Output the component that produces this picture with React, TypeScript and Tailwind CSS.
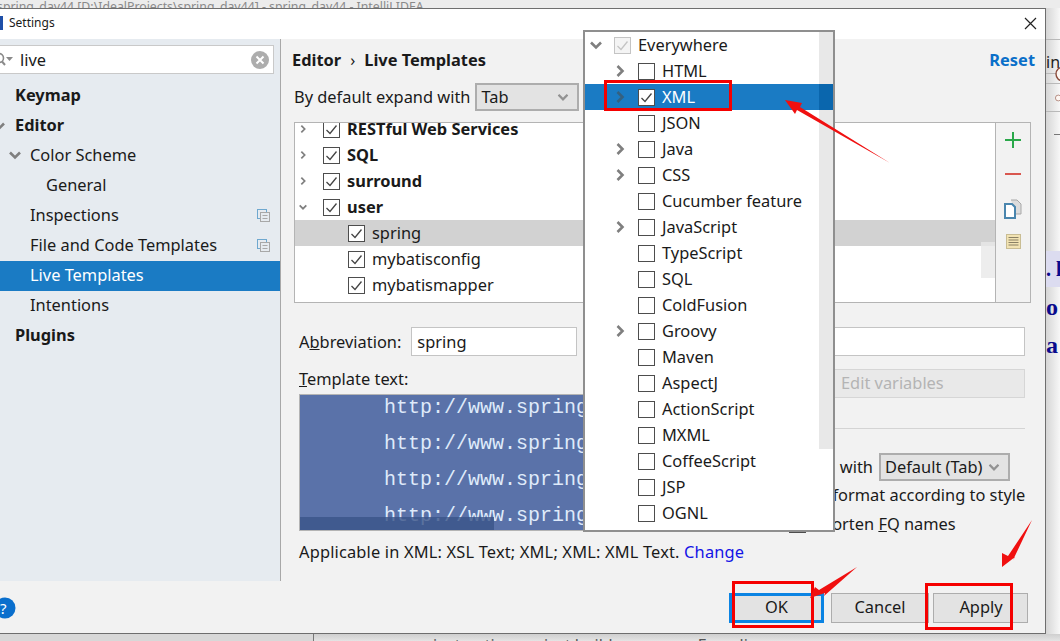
import * as React from "react";

const TREE = [
  { label: "RESTful Web Services", bold: true, chevron: "right", clipped: true },
  { label: "SQL", bold: true, chevron: "right" },
  { label: "surround", bold: true, chevron: "right" },
  { label: "user", bold: true, chevron: "down" },
  { label: "spring", child: true, active: true },
  { label: "mybatisconfig", child: true },
  { label: "mybatismapper", child: true },
];

const CONTEXTS = [
  { label: "HTML", chevron: true },
  { label: "XML", chevron: true, checked: true, selected: true },
  { label: "JSON" },
  { label: "Java", chevron: true },
  { label: "CSS", chevron: true },
  { label: "Cucumber feature" },
  { label: "JavaScript", chevron: true },
  { label: "TypeScript" },
  { label: "SQL" },
  { label: "ColdFusion" },
  { label: "Groovy", chevron: true },
  { label: "Maven" },
  { label: "AspectJ" },
  { label: "ActionScript" },
  { label: "MXML" },
  { label: "CoffeeScript" },
  { label: "JSP" },
  { label: "OGNL" },
];

function Chevron({ down, dark, className }: { down?: boolean; dark?: boolean; className?: string }) {
  return (
    <svg width="12" height="12" viewBox="0 0 12 12" className={className} aria-hidden>
      <path
        d={down ? "M1 3.5 L6 8.5 L11 3.5" : "M3.5 1 L8.5 6 L3.5 11"}
        fill="none"
        stroke={dark ? "#35607f" : "#7f7f7f"}
        strokeWidth="2.6"
      />
    </svg>
  );
}

function Check({ checked, muted }: { checked?: boolean; muted?: boolean }) {
  const line = muted ? "#c4c4c4" : "#4d4d4d";
  return (
    <svg width="17" height="17" viewBox="0 0 17 17" className="shrink-0" aria-hidden>
      <rect x="0.5" y="0.5" width="16" height="16" fill={muted ? "#f4f4f4" : "#ffffff"} stroke={line} />
      {checked && <path d="M3.5 9 L7 12.5 L13.5 4.5" fill="none" stroke={muted ? "#c4c4c4" : "#444444"} strokeWidth="1.3" />}
    </svg>
  );
}

function ScopeIcon() {
  return (
    <svg width="13" height="13" viewBox="0 0 13 13" aria-hidden>
      <rect x="0.5" y="0.5" width="9" height="9" fill="#e6ebf0" stroke="#6fa8cf" />
      <rect x="3.5" y="3.5" width="9" height="9" fill="#e6ebf0" stroke="#a8a8a8" />
      <path d="M5.5 6.5 H10.5 M5.5 9.5 H10.5" stroke="#a8a8a8" />
    </svg>
  );
}

function Combo({ label, className }: { label: string; className: string }) {
  return (
    <div className={`flex h-[28px] shrink-0 items-center justify-between border-2 border-[#adadad] bg-[#e3e3e3] pl-[4px] pr-[8px] ${className}`}>
      <span>{label}</span>
      <Chevron down className="scale-90 opacity-80" />
    </div>
  );
}

function Sidebar() {
  return (
    <aside className="flex w-[281px] shrink-0 flex-col border-r border-[#a8a8a8] bg-[#e6ebf0] pt-[6px]">
      <div className="-ml-[1px] mr-[6px] flex h-[29px] items-center border border-[#c9c9c9] bg-white pr-[4px]">
        <svg width="19" height="16" viewBox="0 0 19 16" className="-ml-[4px] shrink-0" aria-hidden>
          <circle cx="3" cy="6" r="4.5" fill="none" stroke="#8a8a8a" strokeWidth="1.6" />
          <path d="M6 9.5 L9 13" stroke="#8a8a8a" strokeWidth="2" />
          <path d="M10 5 H17 L13.5 9 Z" fill="#8a8a8a" />
        </svg>
        <span className="ml-[5px] flex-1 pt-[1px] text-[#1a1a1a]">live</span>
        <svg width="18" height="18" viewBox="0 0 18 18" aria-hidden>
          <circle cx="9" cy="9" r="9" fill="#adadad" />
          <path d="M5.5 5.5 L12.5 12.5 M12.5 5.5 L5.5 12.5" stroke="#ffffff" strokeWidth="2" />
        </svg>
      </div>
      <nav className="mt-[7px] flex flex-col">
        <div className="flex h-[30px] items-center pb-[2px] pl-[15px] font-bold">Keymap</div>
        <div className="relative flex h-[30px] items-center pb-[2px] pl-[15px] font-bold">
          <Chevron down className="absolute -left-[7px] top-[9px]" />
          Editor
        </div>
        <div className="flex h-[30px] items-center pb-[2px] pl-[9px]">
          <Chevron down />
          <span className="ml-[9px]">Color Scheme</span>
        </div>
        <div className="flex h-[30px] items-center pb-[2px] pl-[46px]">General</div>
        <div className="flex h-[30px] items-center justify-between pb-[2px] pl-[30px] pr-[10px]">
          Inspections
          <ScopeIcon />
        </div>
        <div className="flex h-[30px] items-center justify-between pb-[2px] pl-[30px] pr-[10px]">
          File and Code Templates
          <ScopeIcon />
        </div>
        <div className="flex h-[30px] items-center bg-[#1a7bc4] pb-[2px] pl-[30px] text-white">Live Templates</div>
        <div className="flex h-[30px] items-center pb-[2px] pl-[30px]">Intentions</div>
        <div className="flex h-[30px] items-center pb-[2px] pl-[15px] font-bold">Plugins</div>
      </nav>
    </aside>
  );
}

function TemplateTree() {
  return (
    <div className="flex h-[181px] border border-[#b4b4b4]">
      <div className="relative flex flex-1 flex-col overflow-hidden bg-white">
        {TREE.map((row) => (
          <div
            key={row.label}
            className={`flex h-[26px] shrink-0 items-center ${row.clipped ? "-mt-[7px]" : ""} ${row.active ? "bg-[#d2d2d2]" : ""} ${row.child ? "pl-[53px]" : "pl-[4px]"}`}
          >
            {!row.child && (
              <span className="mr-[16px] flex w-[8px] justify-center">
                <Chevron down={row.chevron === "down"} />
              </span>
            )}
            <Check checked />
            <span className={`ml-[7px] ${row.bold ? "font-bold" : ""}`}>{row.label}</span>
          </div>
        ))}
        <div className="absolute right-0 top-[119px] h-[36px] w-[14px] bg-[#e8e8e8]/80" />
      </div>
      <div className="flex w-[35px] flex-col items-center border-l border-[#b4b4b4] pt-[9px]">
        <svg width="16" height="16" viewBox="0 0 16 16" aria-hidden>
          <path d="M8 0 V16 M0 8 H16" stroke="#2aa84a" strokeWidth="2" />
        </svg>
        <svg width="16" height="16" viewBox="0 0 16 16" className="mt-[18px]" aria-hidden>
          <path d="M0 8 H16" stroke="#d9574f" strokeWidth="2" />
        </svg>
        <svg width="18" height="20" viewBox="0 0 18 20" className="mt-[17px]" aria-hidden>
          <path d="M7 1 H13 L17 5 V15 H12" fill="#dcdcdc" stroke="#a8a8a8" />
          <path d="M1 5 H8 L11 8 V19 H1 Z" fill="#ffffff" stroke="#4a86ae" strokeWidth="2" />
        </svg>
        <svg width="15" height="15" viewBox="0 0 15 15" className="mt-[15px]" aria-hidden>
          <rect x="0.5" y="0.5" width="14" height="14" fill="#f2e3b3" stroke="#c9bd94" />
          <path d="M2.5 3.5 H12.5 M2.5 6 H12.5 M2.5 8.5 H12.5 M2.5 11 H12.5" stroke="#8a8065" />
        </svg>
      </div>
    </div>
  );
}

function TemplateEditor() {
  return (
    <div className="relative h-[137px] overflow-hidden border border-[#b4b4b4] bg-[#5a72a9] pl-[84px] font-['Liberation_Mono',monospace] text-[20px] leading-[36px] text-[#dfeafa]">
      <div className="-mt-[5px] whitespace-nowrap">http://www.springframework.org</div>
      <div className="whitespace-nowrap">http://www.springframework.org</div>
      <div className="whitespace-nowrap">http://www.springframework.org</div>
      <div className="whitespace-nowrap">http://www.springframework.org</div>
      <div className="absolute bottom-0 left-0 h-[13px] w-[194px] bg-[#3a5488]/80" />
    </div>
  );
}

function MainPanel() {
  return (
    <section className="flex min-w-0 flex-1 flex-col pl-[13px] pr-[14px]">
      <div className="flex h-[42px] items-center justify-between font-bold">
        <div className="-ml-[2px] flex items-center">
          Editor
          <span className="mx-[9px] font-normal">›</span>
          Live Templates
        </div>
        <span className="-mr-[4px] text-[#0a6fc9]">Reset</span>
      </div>
      <div className="mt-[2px] flex h-[28px] items-center">
        <span className="mr-[5px]">By default expand with</span>
        <Combo label="Tab" className="w-[104px]" />
      </div>
      <div className="mt-[11px]">
        <TemplateTree />
      </div>
      <div className="mt-[24px] flex h-[29px] items-center pl-[5px] pr-[6px]">
        <span className="pt-[1px]">
          A<span className="underline">b</span>breviation:
        </span>
        <div className="ml-[10px] flex h-[29px] w-[166px] items-center border border-[#c4c4c4] bg-white pl-[5px] pt-[1px]">spring</div>
        <div className="ml-[12px] h-[29px] flex-1 border border-[#c4c4c4] bg-white" />
      </div>
      <div className="mt-[13px] flex pl-[5px] pr-[6px]">
        <div className="w-[478px] shrink-0">
          <div className="flex h-[25px] items-start pt-[2px]">
            <span>
              <span className="underline">T</span>emplate text:
            </span>
          </div>
          <TemplateEditor />
        </div>
        <div className="ml-[12px] flex min-w-0 flex-1 flex-col">
          <div className="ml-[45px] flex h-[29px] items-center border border-[#d6d6d6] bg-[#e9e9e9] pl-[6px] text-[#b4b4b4]">Edit variables</div>
          <div className="ml-[46px] mt-[30px] border-t border-[#d4d4d4]" />
          <div className="mt-[24px] flex h-[28px] items-center justify-end pr-[15px] whitespace-nowrap">
            <span className="mr-[6px]">Expand with</span>
            <Combo label="Default (Tab)" className="w-[131px]" />
          </div>
          <div className="flex h-[28px] items-center">
            <Check />
            <span className="ml-[7px] whitespace-nowrap">Reformat according to style</span>
          </div>
          <div className="mt-[1px] flex h-[28px] items-center">
            <Check />
            <span className="ml-[7px] whitespace-nowrap">
              Shorten <span className="underline">F</span>Q names
            </span>
          </div>
        </div>
      </div>
      <div className="mt-[6px] pl-[5px] tracking-[0.17px]">
        Applicable in XML: XSL Text; XML; XML: XML Text. <span className="text-[#1414e6]">Change</span>
      </div>
    </section>
  );
}

function ContextPopup() {
  return (
    <div className="absolute left-[583px] top-[30px] z-10 h-[502px] w-[252px] overflow-hidden border-2 border-[#8f8f8f] bg-white pb-[5px]">
      <div className="flex h-[26px] items-center">
        <Chevron down className="ml-[5px]" />
        <span className="ml-[12px] flex">
          <Check checked muted />
        </span>
        <span className="ml-[7px]">Everywhere</span>
      </div>
      {CONTEXTS.map((row) => (
        <div key={row.label} className={`flex h-[26px] items-center pl-[29px] ${row.selected ? "bg-[#1a7bc4] text-white" : ""}`}>
          <span className="flex w-[24px]">{row.chevron && <Chevron dark={row.selected} />}</span>
          <Check checked={row.checked} />
          <span className="ml-[7px]">{row.label}</span>
        </div>
      ))}
      <div className="absolute right-0 top-0 h-[417px] w-[14px] bg-[#e8e8e8]" />
      <div className="absolute right-0 top-[52px] h-[26px] w-[14px] bg-[#0a66ad]" />
    </div>
  );
}

function Footer() {
  return (
    <div className="flex h-[52px] shrink-0 items-center pr-[17px] pt-[2px]">
      <svg width="22" height="22" viewBox="0 0 22 22" className="-ml-[6px]" aria-hidden>
        <circle cx="11" cy="11" r="10.5" fill="#0a6fcd" />
      </svg>
      <span className="-ml-[16px] text-[15px] text-white">?</span>
      <div className="ml-auto flex h-[30px] gap-[4px]">
        <button type="button" className="mr-[3px] w-[95px] border-[3px] border-[#0b84e3] bg-[#e3e3e3] pb-[2px]">
          OK
        </button>
        <button type="button" className="w-[98px] border border-[#adadad] bg-[#e3e3e3] pb-[2px]">
          Cancel
        </button>
        <button type="button" className="w-[95px] border border-[#adadad] bg-[#e3e3e3] pb-[2px] pl-[1px]">
          Apply
        </button>
      </div>
    </div>
  );
}

function Annotations() {
  return (
    <>
      <div className="absolute left-[604px] top-[80px] z-20 h-[31px] w-[128px] border-[3px] border-[#f50000]" />
      <div className="absolute left-[732px] top-[581px] z-20 h-[47px] w-[82px] border-[3px] border-[#f50000]" />
      <div className="absolute left-[925px] top-[583px] z-20 h-[47px] w-[88px] border-[3px] border-[#f50000]" />
      <svg width="1060" height="641" viewBox="0 0 1060 641" className="pointer-events-none absolute left-0 top-0 z-20" aria-hidden>
        <polygon points="785,100 802,103 800,107 890,163 797,110 795,114" fill="#f01010" />
        <polygon points="810,598 815,587 819,590 857,567 824,596 825,593" fill="#f01010" />
        <polygon points="1002,567 1002,553 1008,556 1032,520 1013,560 1015,557" fill="#f01010" />
      </svg>
    </>
  );
}

function BehindSliver() {
  return (
    <div className="flex flex-1 flex-col overflow-hidden bg-gradient-to-r from-[#d6d6d6] to-[#f7f7f7] font-['Liberation_Serif',serif] text-[24px] font-bold text-[#0a0a8c]">
      <div className="mt-[31px] h-[35px] border-y border-[#b9b9b9] pt-[14px] font-['Noto_Sans',sans-serif] text-[16px] font-normal leading-none text-[#222]">in</div>
      <div className="-mt-[8px] pl-[9px]">
        <svg width="12" height="16" viewBox="0 0 12 16" className="block" aria-hidden>
          <circle cx="8" cy="8" r="7" fill="#fdf6f2" stroke="#8a4a3a" strokeWidth="1.4" />
        </svg>
      </div>
      <div className="mt-[1px] flex h-[29px] items-center border-y border-[#b9b9b9] pl-[9px]">
        <svg width="12" height="18" viewBox="0 0 12 18" aria-hidden>
          <circle cx="8" cy="9" r="7" fill="#fdf6f2" stroke="#8a4a3a" strokeWidth="1.4" />
        </svg>
      </div>
      <div className="ml-[8px] mt-[22px] h-px w-[6px] bg-[#777]" />
      <div className="mt-[116px] flex h-[36px] items-center bg-[#dcdcf0] text-[20px] leading-none">
        <span>.&nbsp;l</span>
      </div>
      <div className="mt-[8px] h-[24px] leading-[24px]">o</div>
      <div className="mt-[14px] h-[24px] leading-[24px]">a</div>
    </div>
  );
}

export default function App() {
  return (
    <div className="relative flex h-[641px] w-[1060px] flex-col overflow-hidden bg-[#dcdcdc] font-['Noto_Sans',sans-serif] text-[16.4px] leading-none text-[#1a1a1a]">
      <div className="flex h-[8px] shrink-0 items-end overflow-hidden bg-[#ececec]">
        <span className="-ml-[3px] -mb-[6px] whitespace-nowrap text-[12.3px] leading-[14px] text-[#8a8a8a]">
          spring_day44 [D:\IdealProjects\spring_day44] - spring_day44 - IntelliJ IDEA
        </span>
      </div>
      <div className="flex h-[626px] shrink-0">
        <div className="flex w-[1046px] shrink-0 flex-col border-r border-b border-t border-[#6e6e6e] bg-[#f2f2f2]">
          <div className="flex h-[30px] shrink-0 items-center justify-between bg-white pb-[2px] pr-[8px]">
            <div className="flex items-center">
              <span className="mr-[6px] h-[14px] w-[3px] bg-[#1f4fa8]" />
              <span className="text-[12px]">Settings</span>
            </div>
            <svg width="13" height="13" viewBox="0 0 13 13" aria-hidden>
              <path d="M1 1 L12 12 M12 1 L1 12" stroke="#222" strokeWidth="1.2" />
            </svg>
          </div>
          <div className="flex min-h-0 flex-1">
            <Sidebar />
            <MainPanel />
          </div>
          <Footer />
        </div>
        <BehindSliver />
      </div>
      <div className="flex h-[7px] shrink-0 overflow-hidden">
        <div className="w-[314px] border-r border-[#777] bg-[#d8d8d8]" />
        <div className="flex flex-1 bg-gradient-to-b from-[#cfcfcf] to-[#e4e4e4] pl-[119px] pt-[2px] text-[16px] leading-[18px] text-[#555]">
          <span className="whitespace-nowrap">instruction project build</span>
          <span className="ml-[85px] whitespace-nowrap">Encoding</span>
        </div>
      </div>
      <ContextPopup />
      <Annotations />
    </div>
  );
}
